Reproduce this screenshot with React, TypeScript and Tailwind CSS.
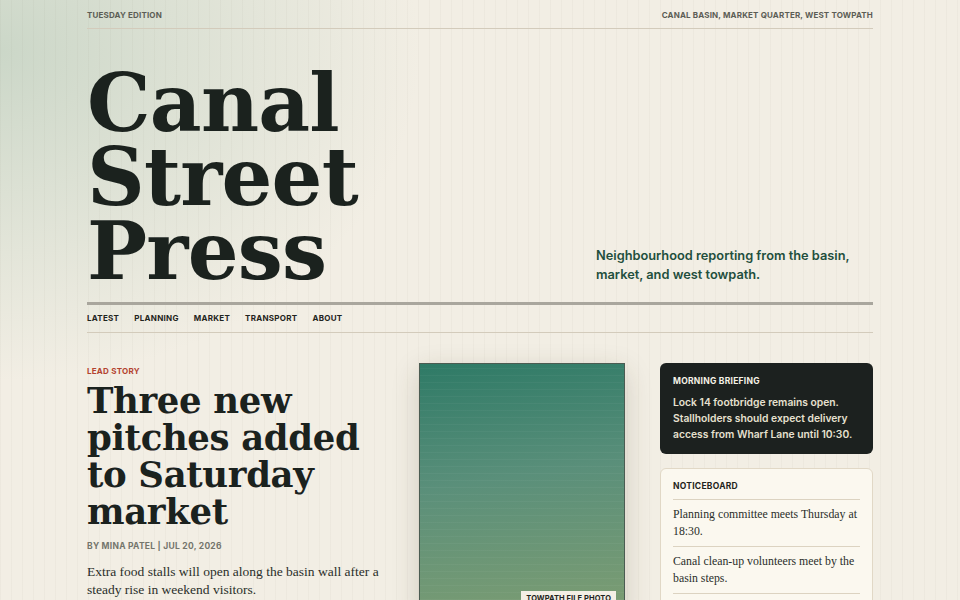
import React from 'react';

const sections = ['Latest', 'Planning', 'Market', 'Transport', 'About'];

const notices = [
  'Planning committee meets Thursday at 18:30.',
  'Canal clean-up volunteers meet by the basin steps.',
  'Lock gates closed for survey on Friday morning.',
];

const display = "font-['DejaVu_Serif','Liberation_Serif',serif]";
const body = "font-['Liberation_Serif','DejaVu_Serif',serif]";
const sans = "font-['Inter','Liberation_Sans',sans-serif]";

export default function App() {
  return (
    <div className="relative min-h-[600px] overflow-hidden bg-[#f2eee4]">
      {/* page glow + faint paper ruling */}
      <div className="pointer-events-none absolute inset-0 bg-[radial-gradient(ellipse_420px_330px_at_0%_8%,rgba(165,192,172,0.5),transparent)]" />
      <div className="pointer-events-none absolute inset-0 bg-[repeating-linear-gradient(90deg,rgba(90,80,60,0.035)_0_1px,transparent_1px_11px)]" />

      <div className={`relative mx-auto w-[786px] ${sans} text-[#1c231f]`}>
        {/* Edition strip */}
        <div className="flex items-center justify-between border-b border-[#d3cbbb] pt-[9px] pb-[7px] text-[8px] font-bold uppercase tracking-[0.02em] text-[#5c5d55]">
          <span>Tuesday Edition</span>
          <span>Canal Basin, Market Quarter, West Towpath</span>
        </div>

        {/* Masthead */}
        <header className="flex items-end justify-between pt-[37px] pb-[14px]">
          <h1 className={`${display} text-[80px] font-bold leading-[74px] tracking-[-0.01em] text-[#1b221e]`}>
            Canal
            <br />
            Street
            <br />
            Press
          </h1>
          <p className="mb-[4px] w-[277px] text-[12.8px] font-semibold leading-[19px] text-[#1f4f3d]">
            Neighbourhood reporting from the basin, market, and west towpath.
          </p>
        </header>

        <div className="h-[3px] bg-[#a9a69d]" />
        <nav className="flex gap-[15px] border-b border-[#d3cbbb] pt-[7px] pb-[8px] text-[8px] font-bold uppercase tracking-[0.035em] text-[#1f2420]">
          {sections.map(s => (
            <span key={s}>{s}</span>
          ))}
        </nav>

        {/* Front page */}
        <main className="grid grid-cols-[297px_206px_213px] gap-[35px] pt-[30px]">
          <article className="pt-[2px]">
            <p className="text-[8px] font-bold uppercase tracking-[0.03em] text-[#b3432f]">Lead Story</p>
            <h2 className={`${display} mt-[5px] text-[35.5px] font-bold leading-[37px] tracking-[-0.01em] text-[#1b221e]`}>
              Three new pitches added to Saturday market
            </h2>
            <p className="mt-[10px] text-[8.5px] font-bold uppercase tracking-[0.03em] text-[#74756c]">
              By Mina Patel | Jul 20, 2026
            </p>
            <p className={`${body} mt-[10px] text-[13.5px] leading-[18px] text-[#2a2e2a]`}>
              Extra food stalls will open along the basin wall after a steady rise in weekend visitors.
            </p>
          </article>

          <figure className="relative h-[252px] border border-[#4b5c52] bg-[linear-gradient(172deg,#2e7a66_0%,#5a8f7a_45%,#7d9d72_100%)] shadow-[0_8px_26px_rgba(60,50,30,0.18)]">
            <div className="absolute inset-0 bg-[repeating-linear-gradient(0deg,rgba(255,255,255,0.035)_0_1px,transparent_1px_7px)]" />
            <figcaption className="absolute right-[8px] bottom-[8px] bg-[#f3efe5] px-[5px] py-[2px] text-[7.5px] font-bold uppercase tracking-[0.01em] text-[#1f2420]">
              Towpath File Photo
            </figcaption>
          </figure>

          <aside className="flex flex-col gap-[14px]">
            <div className="rounded-md bg-[#1c211f] px-[13px] pt-[12px] pb-[12px]">
              <p className="text-[8.5px] font-bold uppercase tracking-[0.03em] text-[#f5f1e6]">Morning Briefing</p>
              <p className="mt-[6px] text-[10.3px] font-semibold leading-[16px] text-[#e6e0cf]">
                Lock 14 footbridge remains open. Stallholders should expect delivery access from Wharf Lane until 10:30.
              </p>
            </div>

            <div className="rounded-md border border-[#e1d8c6] bg-[#fbf8ef] px-[12px] pt-[11px]">
              <p className="border-b border-[#dcd3c1] pb-[6px] text-[8.5px] font-bold uppercase tracking-[0.03em] text-[#1f2420]">
                Noticeboard
              </p>
              <ul className={`${body} text-[11.8px] leading-[17px] text-[#2a2e2a]`}>
                {notices.map(n => (
                  <li key={n} className="border-b border-[#dcd3c1] py-[6px]">
                    {n}
                  </li>
                ))}
              </ul>
            </div>
          </aside>
        </main>
      </div>
    </div>
  );
}
